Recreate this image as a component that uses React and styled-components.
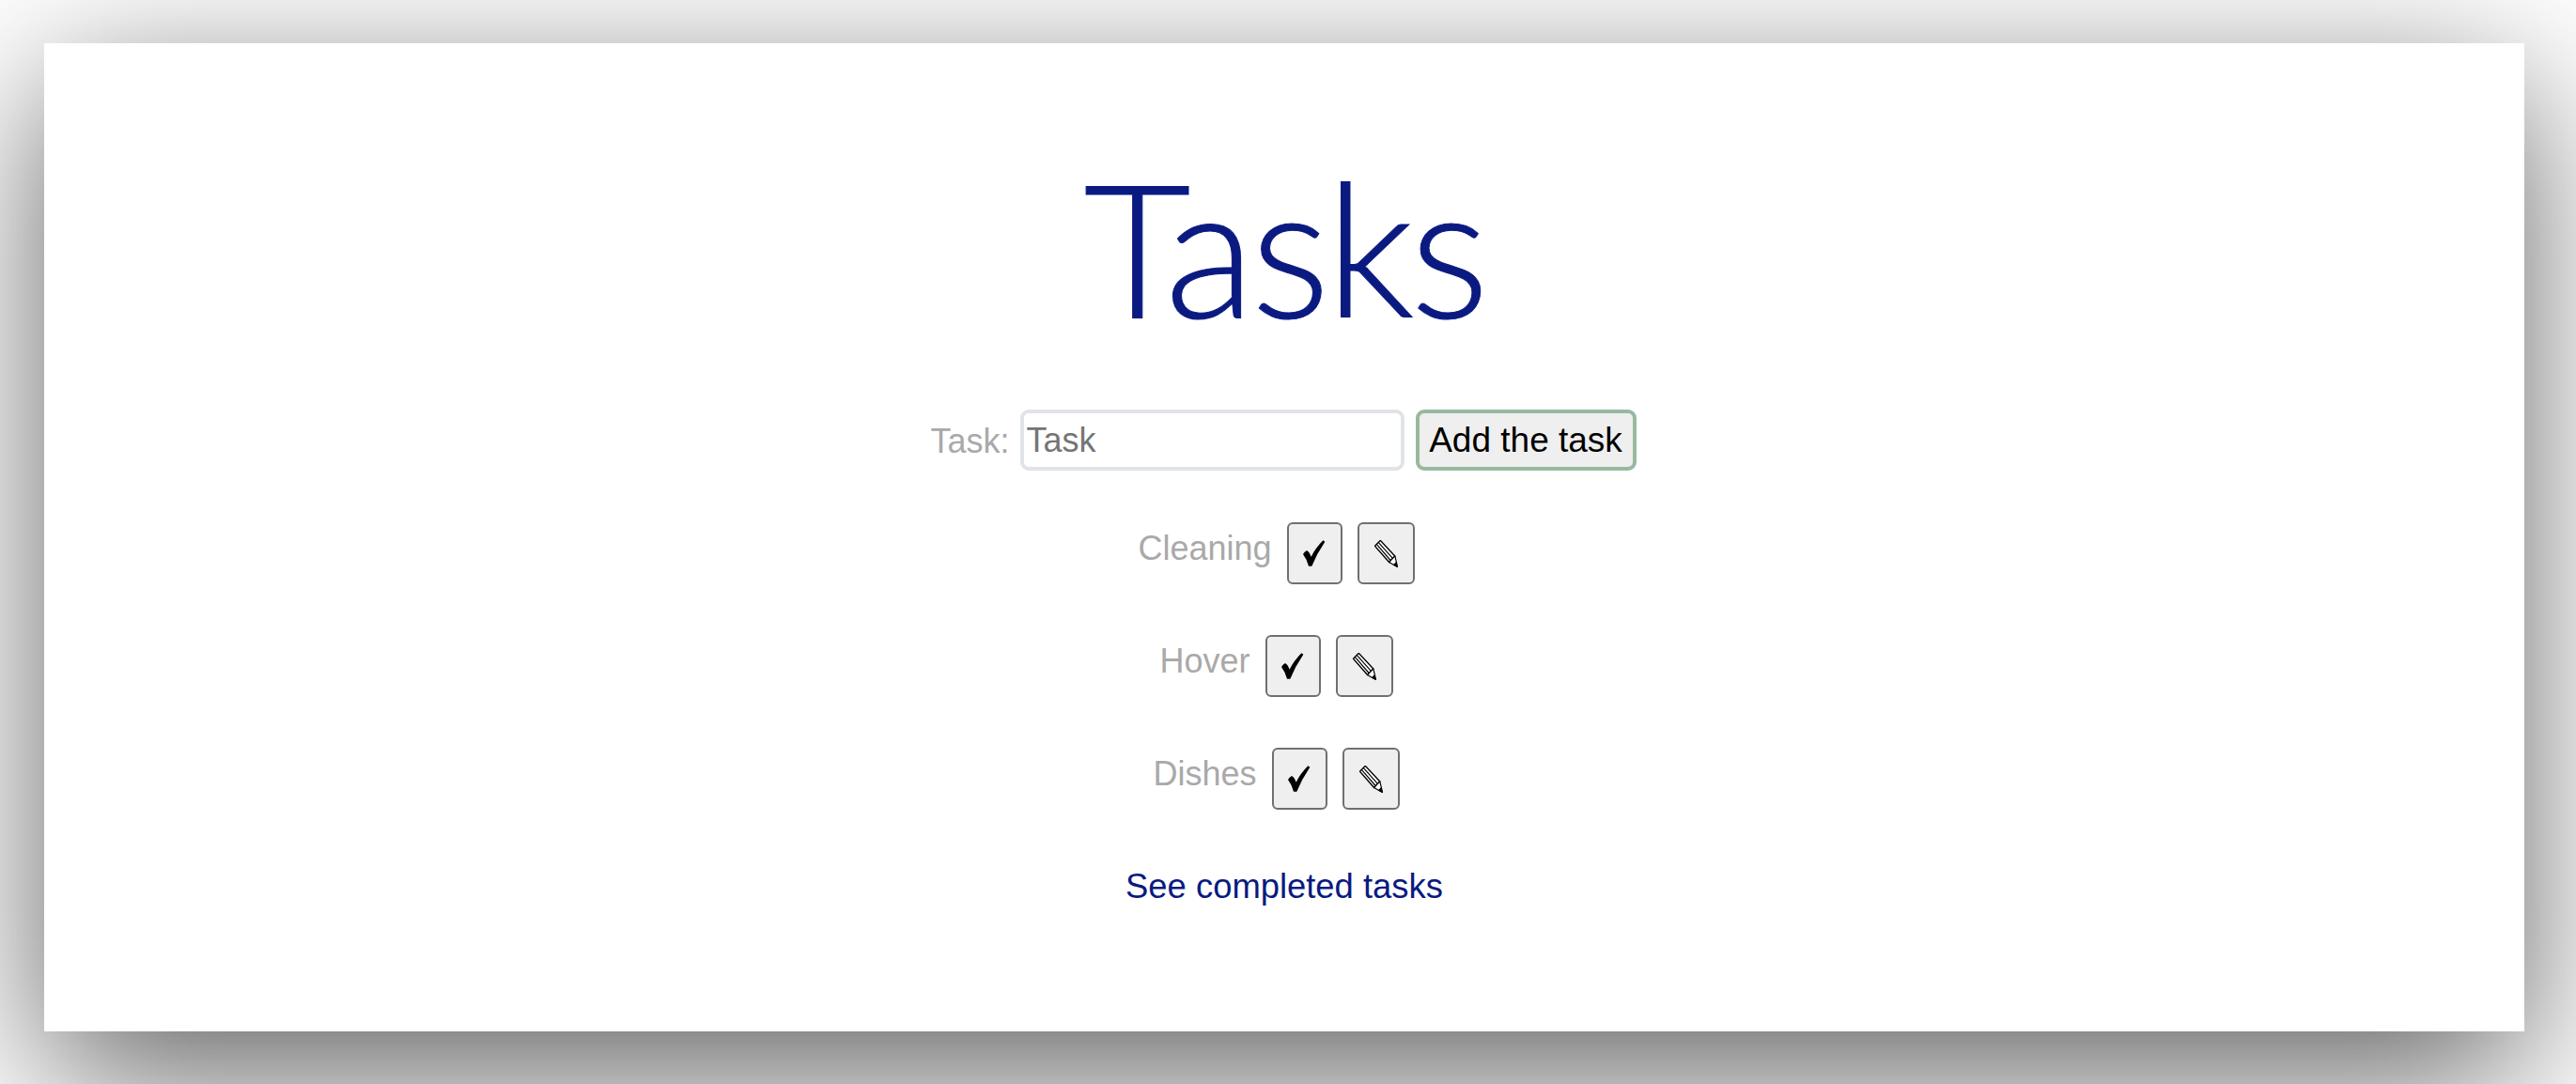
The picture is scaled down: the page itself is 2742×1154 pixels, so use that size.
import React from "react";
import styled, { createGlobalStyle } from "styled-components";

const Global = createGlobalStyle`
  html, body { margin: 0; padding: 0; background: #fff; overflow: hidden; }
  body { font-family: "Liberation Sans", Arial, sans-serif; }
  * { box-sizing: border-box; }
`;

const Page = styled.div`
  width: 2742px;
  height: 1154px;
  padding: 46px 55px 56px 47px;
  overflow: hidden;
`;

const Panel = styled.main`
  width: 2640px;
  height: 1052px;
  background: #fff;
  box-shadow: 0 48px 156px rgba(0, 0, 0, 0.62);
  display: flex;
  flex-direction: column;
  align-items: center;
  padding-top: 96px;
`;

const Title = styled.h1`
  margin: 0 0 54px;
  font-family: Lato, "Noto Sans", sans-serif;
  font-weight: 300;
  font-size: 198px;
  line-height: 240px;
  letter-spacing: -4.4px;
  color: #0a1a80;
  -webkit-text-stroke: 1px #0a1a80;
`;

const Form = styled.form`
  display: flex;
  align-items: stretch;
  height: 65px;
  margin-bottom: 55px;
  padding-right: 2px;
`;

const FieldLabel = styled.label`
  font-size: 36px;
  line-height: 67px;
  color: #a9a9a9;
  margin-right: 11px;
`;

const TaskInput = styled.input`
  width: 409px;
  height: 65px;
  border: 4px solid #e0e4e8;
  border-radius: 9px;
  background: #fff;
  padding: 0 3px;
  margin: 0 12px 0 0;
  font: 36px "Liberation Sans", Arial, sans-serif;
  color: #000;
  outline: none;
  &::placeholder { color: #757575; opacity: 1; }
`;

const AddButton = styled.button`
  width: 235px;
  height: 65px;
  border: 4px solid #98b9a0;
  border-radius: 9px;
  background: #efefef;
  padding: 0;
  font: 37px "Liberation Sans", Arial, sans-serif;
  color: #000;
`;

const TaskList = styled.ul`
  list-style: none;
  margin: 0;
  padding: 0;
  display: flex;
  flex-direction: column;
  align-items: center;
  gap: 54px;
`;

const TaskRow = styled.li`
  display: flex;
  align-items: flex-start;
  gap: 16px;
  height: 66px;
  padding-right: 17px;
`;

const TaskName = styled.span`
  font-size: 36px;
  line-height: 56px;
  color: #a9a9a9;
`;

const IconButton = styled.button`
  width: ${(p) => p.$width}px;
  height: 66px;
  padding: 0;
  display: flex;
  align-items: center;
  justify-content: center;
  border: 2px solid #707070;
  border-radius: 6px;
  background: #efefef;
  color: #000;
`;

const CompletedLink = styled.a`
  margin-top: 58px;
  font-size: 36.4px;
  line-height: 48px;
  color: #0a1a80;
  text-decoration: none;
`;

const CheckIcon = () => (
  <svg width="24" height="28" viewBox="0 0 72 84" aria-hidden="true">
    <path
      d="M0 45 Q4 37 12 33 Q20 37 26 53 Q40 25 64 1 L70 5 Q44 43 28 83 L18 83 Q12 61 0 45 Z"
      fill="#000"
    />
  </svg>
);

const PencilIcon = () => (
  <svg width="25" height="29" viewBox="0 0 72 84" aria-hidden="true">
    <path d="M1 18 L18 1 L63 49 L45 68 Z" fill="#fff" stroke="#000" strokeWidth="4" strokeLinejoin="round" />
    <path d="M6.5 12.5 L50 63 M12 7 L56 56" fill="none" stroke="#000" strokeWidth="3.4" />
    <path d="M45 68 L63 49 L71 83 Z" fill="#fff" stroke="#000" strokeWidth="3.4" strokeLinejoin="round" />
    <path d="M57 77 L66 67 L72 84 Z" fill="#000" />
  </svg>
);

const tasks = ["Cleaning", "Hover", "Dishes"];

export default function App() {
  return (
    <>
      <Global />
      <Page>
        <Panel>
          <Title>Tasks</Title>
          <Form onSubmit={(e) => e.preventDefault()}>
            <FieldLabel htmlFor="task">Task:</FieldLabel>
            <TaskInput id="task" placeholder="Task" />
            <AddButton type="submit">Add the task</AddButton>
          </Form>
          <TaskList>
            {tasks.map((t) => (
              <TaskRow key={t}>
                <TaskName>{t}</TaskName>
                <IconButton $width={59} aria-label="Done"><CheckIcon /></IconButton>
                <IconButton $width={61} aria-label="Edit"><PencilIcon /></IconButton>
              </TaskRow>
            ))}
          </TaskList>
          <CompletedLink href="#">See completed tasks</CompletedLink>
        </Panel>
      </Page>
    </>
  );
}
